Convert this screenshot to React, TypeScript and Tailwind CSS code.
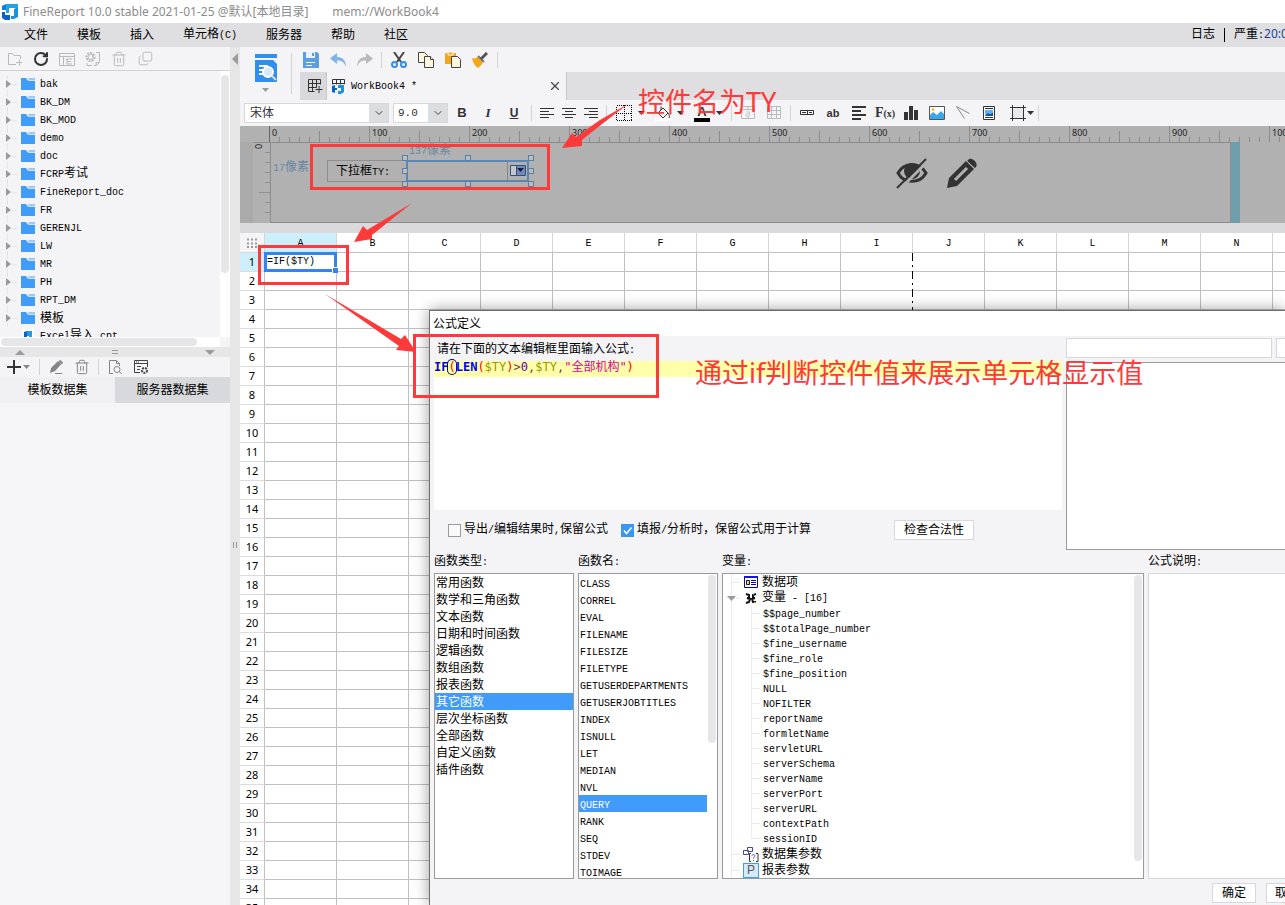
import type { ReactNode } from "react"
import { ChevronDown, RotateCw, Trash2, Copy, X } from "lucide-react"

const folders = [
  "bak", "BK_DM", "BK_MOD", "demo", "doc", "FCRP考试", "FineReport_doc",
  "FR", "GERENJL", "LW", "MR", "PH", "RPT_DM", "模板",
]

const menus = ["文件", "模板", "插入", "单元格(C)", "服务器", "帮助", "社区"]

const columns = ["A", "B", "C", "D", "E", "F", "G", "H", "I", "J", "K", "L", "M", "N", "O"]

const rows = Array.from({ length: 35 }, (_, i) => i + 1)

const categories = [
  "常用函数", "数学和三角函数", "文本函数", "日期和时间函数", "逻辑函数", "数组函数",
  "报表函数", "其它函数", "层次坐标函数", "全部函数", "自定义函数", "插件函数",
]

const functionNames = [
  "CLASS", "CORREL", "EVAL", "FILENAME", "FILESIZE", "FILETYPE", "GETUSERDEPARTMENTS",
  "GETUSERJOBTITLES", "INDEX", "ISNULL", "LET", "MEDIAN", "NVL", "QUERY", "RANK", "SEQ",
  "STDEV", "TOIMAGE",
]

const variables = [
  "$$page_number", "$$totalPage_number", "$fine_username", "$fine_role", "$fine_position",
  "NULL", "NOFILTER", "reportName", "formletName", "servletURL", "serverSchema",
  "serverName", "serverPort", "serverURL", "contextPath", "sessionID",
]

// Half-width runs are set smaller so that two of them fill one full-width cell
function T({ children }: { children: string }) {
  return (
    <>
      {children.split(/([\x20-\x7f]+)/).filter(Boolean).map((part, i) =>
        /^[\x20-\x7f]/.test(part) ? (
          <span key={i} className="font-['Liberation_Mono',monospace] text-[10px] whitespace-pre">{part}</span>
        ) : (
          <span key={i}>{part}</span>
        )
      )}
    </>
  )
}

function Icon({ children, size = 16 }: { children: ReactNode; size?: number }) {
  return (
    <svg width={size} height={size} viewBox="0 0 16 16" fill="none" stroke="currentColor" className="shrink-0">
      {children}
    </svg>
  )
}

function Tool({ label, children, className = "w-[26px]" }: { label: string; children: ReactNode; className?: string }) {
  return (
    <button type="button" aria-label={label} title={label} className={`flex h-5 shrink-0 items-center justify-center ${className}`}>
      {children}
    </button>
  )
}

function Sep({ className = "mx-[3px]" }: { className?: string }) {
  return <span className={`h-4 w-px shrink-0 bg-[#d3d3d6] ${className}`} />
}

function Caret() {
  return (
    <svg width="7" height="4" viewBox="0 0 7 4" className="shrink-0">
      <path d="M0 0h7L3.500 4z" fill="currentColor" />
    </svg>
  )
}

function FolderIcon() {
  return (
    <svg width="14" height="12" viewBox="0 0 14 12" className="shrink-0">
      <path d="M0 0h5l2 2h7v10H0z" fill="#409bf9" />
      <path d="M7 .5h7v1H8z" fill="#409bf9" />
      <path d="M5.500 1l2 1.500H14" stroke="#cfe6ff" fill="none" />
    </svg>
  )
}

function Logo() {
  return (
    <svg width="16" height="16" viewBox="0 0 16 16" className="shrink-0">
      <path d="M0 2l4-2v6H0z" fill="#0b7fd8" />
      <path d="M4 0h12v4l-2 2V4H7v5H4z" fill="#23a3e6" />
      <path d="M12 5l4-2v10l-4 2H9v-3h3z" fill="#1a93de" />
      <path d="M0 8h3v3h5v5H3l-3-2z" fill="#0a63c4" />
    </svg>
  )
}

function FileTree() {
  return (
    <div className="flex h-[276px] flex-col">
      <div className="flex min-h-0 flex-1">
        <ul className="min-w-0 flex-1 overflow-hidden pt-1">
          {folders.map((name) => (
            <li key={name} className="flex h-[18px] items-center">
              <svg width="21" height="18" viewBox="0 0 21 18" className="shrink-0">
                <path d="M6 5l5 4-5 4z" fill="#9b9b9b" />
                <path d="M12 9.500h5M7.500 0v4M7.500 14v4" stroke="#e6e6e8" />
              </svg>
              <FolderIcon />
              <span className="ml-[5px] whitespace-nowrap"><T>{name}</T></span>
            </li>
          ))}
          <li className="flex h-[18px] items-center pl-[22px]">
            <svg width="12" height="14" viewBox="0 0 12 14" className="shrink-0 bg-white">
              <path d="M2 3l3-1v10l-3-1z" fill="#0a64c8" />
              <path d="M5 2h5v9H7V7H5z" fill="#1f9de0" />
            </svg>
            <span className="ml-[6px] whitespace-nowrap"><T>Excel导入.cpt</T></span>
          </li>
        </ul>
        <div className="w-[10px] bg-white px-px pt-1">
          <div className="h-[198px] rounded bg-[#e6e6e8]" />
        </div>
      </div>
      <div className="flex h-[10px] bg-white">
        <div className="my-px ml-px w-[196px] rounded bg-[#e6e6e8]" />
        <div className="ml-auto w-[10px] bg-[#f4f4f7]" />
      </div>
    </div>
  )
}

function Sidebar() {
  return (
    <aside className="flex w-[230px] shrink-0 flex-col bg-[#f4f4f7]">
      <div className="flex h-6 items-center border-b border-[#d3d3d6] pl-[2px] text-[#b9b9bb]">
        <Tool label="新建文件夹">
          <Icon><path d="M9 13.500H1.500v-11h4l1.500 2h6.500V8M9 11.500h6M12.500 8.500v6" /></Icon>
        </Tool>
        <Tool label="刷新"><RotateCw size={16} strokeWidth={3} className="text-[#333]" /></Tool>
        <Tool label="重命名">
          <Icon><path d="M.5 2.500h15v12H.5zM.5 5.500h15M4.500 5.500v9M7 8h6M8 8v5M8 10.500h4M8 13h5" /></Icon>
        </Tool>
        <Tool label="设置">
          <Icon>
            <circle cx="5.500" cy="6" r="4" strokeWidth="2" strokeDasharray="2 1" />
            <circle cx="5.500" cy="6" r="2.500" />
            <path d="M11 1.500h3.500v9M9 14.500h2M2 12v2.500h5M11 14.500v-3h3.500z" />
          </Icon>
        </Tool>
        <Tool label="删除"><Trash2 size={16} strokeWidth={1.500} /></Tool>
        <Tool label="复制"><Copy size={15} strokeWidth={1.500} className="-scale-y-100" /></Tool>
      </div>
      <FileTree />
      <div className="flex h-[10px] items-center justify-between bg-[#e6e6e6] px-[15px] text-[#9b9b9b]">
        <svg width="10" height="5" viewBox="0 0 10 5"><path d="M0 5l5-5 5 5z" fill="currentColor" /></svg>
        <svg width="6" height="4" viewBox="0 0 6 4"><path d="M0 .5h6M0 3.500h6" stroke="currentColor" /></svg>
        <svg width="10" height="5" viewBox="0 0 10 5"><path d="M0 0l5 5 5-5z" fill="currentColor" /></svg>
      </div>
      <div className="flex h-5 items-center text-[#858585]">
        <Tool label="添加数据集" className="w-9 gap-[2px]">
          <svg width="14" height="14" viewBox="0 0 14 14"><path d="M0 7h14M7 0v14" stroke="#333" strokeWidth="2" /></svg>
          <Caret />
        </Tool>
        <Sep />
        <Tool label="编辑">
          <Icon>
            <path d="M3 9l7-7 3.500 3L7 12l-5 2z" fill="currentColor" stroke="none" />
            <path d="M11.500 1.500l3 3" strokeWidth="2" />
            <path d="M7 14.500h7" />
          </Icon>
        </Tool>
        <Tool label="删除"><Trash2 size={16} strokeWidth={1.500} /></Tool>
        <Sep />
        <Tool label="预览">
          <Icon><path d="M6 14.500H2.500v-13h7l3 3V7M9.500 1.500v3h3" /><circle cx="10" cy="10.500" r="3" /><path d="M12 12.500l3 2.500" /></Icon>
        </Tool>
        <Tool label="连接配置">
          <Icon><g stroke="#444"><path d="M7 13.500H1.500v-12h13V8M1.500 4.500h13M3 3h1M5 3h1M4 7.500h4M4 10.500h3" /><circle cx="11.500" cy="11.500" r="2.500" strokeWidth="2" strokeDasharray="2 1" /></g></Icon>
        </Tool>
      </div>
      <div className="grid h-[26px] grid-cols-2">
        <button type="button" className="bg-[#f0f0f3]">模板数据集</button>
        <button type="button" className="bg-[#d8d9dd]">服务器数据集</button>
      </div>
      <div className="flex-1 bg-[#f5f5f7]" />
    </aside>
  )
}

function QuickBar() {
  return (
    <div className="flex h-[25px] items-center">
      <div className="flex gap-[11px] pl-[3px]">
        <Tool label="保存" className="w-4">
          <Icon><path d="M0 0h14l2 2v14H0z" fill="#5d9ee0" stroke="none" /><path d="M3 0h9v6H3z" fill="#eaf3fc" stroke="none" /><path d="M9 1h2v3H9z" fill="#5d9ee0" stroke="none" /><path d="M3 10.500h9M3 13.500h6" stroke="#fff" /></Icon>
        </Tool>
        <Tool label="撤销" className="w-4">
          <Icon><path d="M7 1L0 6.500 7 12V8.500c4 0 7 1 9 6.500 0-6-3-10-9-10z" fill="#7db3ee" stroke="none" /></Icon>
        </Tool>
        <Tool label="重做" className="w-4">
          <Icon><path d="M9 1l7 5.500L9 12V8.500c-4 0-7 1-9 6.500 0-6 3-10 9-10z" fill="#b7b9bb" stroke="none" /></Icon>
        </Tool>
      </div>
      <Sep className="mr-[9px] ml-2" />
      <div className="flex gap-[11px]">
        <Tool label="剪切" className="w-4">
          <Icon><path d="M3 0l7 10M13 0L6 10" stroke="#444" strokeWidth="2" /><g stroke="#2f8ef0" strokeWidth="2"><circle cx="3.500" cy="12.500" r="2.500" /><circle cx="12.500" cy="12.500" r="2.500" /></g></Icon>
        </Tool>
        <Tool label="复制" className="w-4">
          <Icon><g fill="#fff6df" stroke="#444"><path d="M.5.500h6l3 3v7h-9z" /><path d="M6.500 4.500h6l3 3v8h-9z" /><path d="M12.500 4.500v3h3" /></g></Icon>
        </Tool>
        <Tool label="粘贴" className="w-4">
          <Icon><path d="M0 1h11v11H0z" fill="#f2a51d" stroke="none" /><path d="M3 0h5v3H3z" fill="#f2a51d" stroke="#fff" /><path d="M6.500 4.500h6l3 3v8h-9z" fill="#fff6df" stroke="#444" /></Icon>
        </Tool>
        <Tool label="格式刷" className="w-4">
          <Icon><path d="M0 6c2 1 4 0 6-1l5 5c-1 2-2 4-5 6-3-2-5-5-6-10z" fill="#f5a716" stroke="none" /><path d="M6 4l6 6" stroke="#777" strokeWidth="2" /><path d="M9 7l6-6" stroke="#555" strokeWidth="3" /></Icon>
        </Tool>
      </div>
      <Sep className="ml-[9px]" />
    </div>
  )
}

function GridGlyph() {
  return <path d="M1.500 1.500h12v5M1.500 1.500v12h6M1.500 5.500h12M1.500 9.500h8M5.500 1.500v12M9.500 1.500v8" stroke="#333" />
}

function TabStrip() {
  return (
    <div className="flex h-7 bg-[#dfdfe2]">
      <button type="button" aria-label="新建工作簿" className="flex w-[27px] items-center justify-center border-r border-[#c6c6ca] bg-[#d9d9dd] pl-1">
        <Icon><GridGlyph /><path d="M12 8v7M8.500 11.500h7" stroke="#333" /></Icon>
      </button>
      <div className="flex w-[240px] items-center border-r border-[#c6c6ca] bg-[#f4f4f7] pl-1">
        <Icon><GridGlyph /><path d="M0 6.500h14V16H0z" fill="#f4f4f7" stroke="none" /><path d="M1 8l3-1v3h2v2H4v3l-3-1z" fill="#0a63c4" stroke="none" /><path d="M7 7h6v7l-3 2H7v-3h3v-3H7z" fill="#1a93de" stroke="none" /></Icon>
        <span className="ml-1"><T>WorkBook4 *</T></span>
        <button type="button" aria-label="关闭" className="ml-auto mr-1"><X size={14} className="text-[#444]" /></button>
      </div>
    </div>
  )
}

function Dropdown({ label, value, wide }: { label: string; value: string; wide?: boolean }) {
  return (
    <label className={`relative flex h-5 shrink-0 border border-[#d8d8dc] bg-white ${wide ? "w-[145px]" : "mr-px ml-1 w-[55px]"}`}>
      <select aria-label={label} className={`w-full appearance-none bg-transparent outline-none ${wide ? "pl-[5px]" : "pl-1 font-['Liberation_Mono',monospace] text-[11px]"}`}>
        <option>{value}</option>
      </select>
      <span className="pointer-events-none absolute inset-y-0 right-0 flex w-[19px] items-center justify-center bg-[#dcdde1]">
        <ChevronDown size={12} className="text-[#444]" />
      </span>
    </label>
  )
}

function FormatBar() {
  return (
    <div className="flex h-[26px] items-center pl-1 text-[#333]">
      <Dropdown label="字体" value="宋体" wide />
      <Dropdown label="字号" value="9.0" />
      <Tool label="加粗"><b className="font-['Liberation_Sans',sans-serif] text-[13px]">B</b></Tool>
      <Tool label="斜体"><b className="font-['Liberation_Serif',serif] text-[13px] italic">I</b></Tool>
      <Tool label="下划线"><b className="font-['Liberation_Sans',sans-serif] text-[12px] underline">U</b></Tool>
      <Sep className="mx-1" />
      <Tool label="左对齐" className="w-[22px]"><Icon><path d="M1 3.500h14M1 6.500h9M1 9.500h14M1 12.500h9" /></Icon></Tool>
      <Tool label="居中" className="w-[22px]"><Icon><path d="M1 3.500h14M4 6.500h8M1 9.500h14M4 12.500h8" /></Icon></Tool>
      <Tool label="右对齐" className="w-[22px]"><Icon><path d="M1 3.500h14M6 6.500h9M1 9.500h14M6 12.500h9" /></Icon></Tool>
      <Sep className="mx-1" />
      <Tool label="边框" className="w-[39px] gap-[6px]">
        <Icon><path d="M.5.500h15v15H.5zM8.500 0v16M0 8.500h16" stroke="#000" strokeDasharray="1 1" shapeRendering="crispEdges" /></Icon>
        <Caret />
      </Tool>
      <Tool label="填充色" className="w-[39px] gap-[6px]">
        <Icon><path d="M3 8l5-5 5 5-5 5zM6 5V1.500M13 8c1 2 2 3 1 5" /><path d="M0 13h16v3H0z" fill="#fff" stroke="none" /></Icon>
        <Caret />
      </Tool>
      <Tool label="字体色" className="w-[39px] gap-[6px]">
        <span className="w-4 border-b-4 border-black text-center font-['Liberation_Sans',sans-serif] text-[13px] leading-[13px] font-bold">A</span>
        <Caret />
      </Tool>
      <Sep />
      <Tool label="合并单元格"><Icon><path d="M1.500 1.500h13v12h-13zM1.500 4.500h13M8 1.500v3M8 11v2.500" stroke="#bbb" /><path d="M6 7h3.500v4H6V9h3" stroke="#ccc" /></Icon></Tool>
      <Tool label="取消合并"><Icon><path d="M1.500 1.500h13v12h-13zM1.500 5.500h13M1.500 9.500h13M5.500 1.500v12M10.500 1.500v12" stroke="#bbb" /></Icon></Tool>
      <Sep />
      <Tool label="单元格元素"><Icon><path d="M1.500 5.500h13v4h-13zM8.500 5.500v4M3 7.500h4M10 7.500h3" /></Icon></Tool>
      <Tool label="文本"><b className="font-['Liberation_Sans',sans-serif] text-[11px]">ab</b></Tool>
      <Tool label="富文本"><Icon><path d="M1 2h14M1 6h9M1 10h14M1 14h9" strokeWidth="2" /></Icon></Tool>
      <Tool label="公式"><span className="font-['Liberation_Serif',serif] text-[14px] font-bold">F<span className="text-[10px]">(x)</span></span></Tool>
      <Tool label="图表"><Icon><path d="M1 7h4v8H1zM6 1h4v14H6zM11 5h4v10h-4z" fill="currentColor" stroke="none" /></Icon></Tool>
      <Tool label="图片"><Icon><path d="M.5 1.500h15v13H.5z" fill="#fff" stroke="#555" /><path d="M1 14V10l3-3 4 3 4-4 3 3v5z" fill="#39a7ec" stroke="none" /><circle cx="4" cy="4.500" r="1.500" fill="#fbc02d" stroke="none" /></Icon></Tool>
      <Tool label="斜线"><Icon><path d="M1.500 1.500l8 12M1.500 1.500l13 7" stroke="#888" /></Icon></Tool>
      <Tool label="子报表"><Icon><path d="M2.500 1.500h11v13h-11z" fill="#fff" /><path d="M4 3.500h8M4 12.500h8" /><path d="M4 5h8v6H4z" fill="#5fb0f5" stroke="none" /><path d="M4 11l3-3 2 1.500 3-2V11z" fill="#1c4f8f" stroke="none" /></Icon></Tool>
      <Tool label="悬浮元素" className="ml-[7px] w-[26px] gap-px">
        <Icon><path d="M2.500 2.500h11v11h-11z" fill="#e8e8ea" /><path d="M2.500 0v16M13.500 0v16M0 2.500h16M0 13.500h16" /></Icon>
        <Caret />
      </Tool>
      <Sep />
    </div>
  )
}

function Ruler() {
  return (
    <div className="h-4 overflow-hidden bg-[#b1b1b1]">
      <svg width="1400" height="17" viewBox="0 0 1400 17" shapeRendering="crispEdges">
        {Array.from({ length: 120 }, (_, i) => (
          <path key={i} d={`M${29.5 + i * 10} ${i % 10 === 0 ? 0 : i % 5 === 0 ? 5 : 11}V17`} stroke={i === 0 ? "#666" : "#8c8c8c"} />
        ))}
        {Array.from({ length: 12 }, (_, i) => (
          <text key={i} x={32 + i * 100} y="10" fontSize="9" fontFamily="'Noto Sans', sans-serif" fill="#222">{i * 100}</text>
        ))}
      </svg>
    </div>
  )
}

const handles = [
  "left-[131px] top-3", "left-[194px] top-3", "left-[257px] top-3",
  "left-[131px] top-[25px]", "left-[257px] top-[25px]",
  "left-[131px] top-[38px]", "left-[194px] top-[38px]", "left-[257px] top-[38px]",
]

function ParamPane() {
  return (
    <div className="flex h-[81px] bg-[#b1b1b1]">
      <div className="w-[13px] bg-[#aaaaaa]" />
      <svg width="17" height="81" viewBox="0 0 17 81" className="shrink-0" shapeRendering="crispEdges">
        <path d="M0 .5h17M12 10.500h5M12 20.500h5M12 30.500h5M12 40.500h5M6 50.500h11M12 60.500h5M12 70.500h5" stroke="#909090" />
        <text transform="translate(9 7) rotate(-90)" fontSize="9" fontFamily="'Noto Sans', sans-serif" fill="#222">0</text>
      </svg>
      {/* Design canvas */}
      <div className="relative w-[961px] shrink-0 overflow-hidden border border-[#8c8c8c]">
        <span className="absolute top-4 left-[2px] leading-4 text-[#6a87a3]"><T>17像素</T></span>
        <span className="absolute -top-px left-[138px] leading-4 text-[#6a87a3]"><T>137像素</T></span>
        <label htmlFor="combo-ty" className="absolute top-[17px] left-14 h-[22px] w-[80px] border border-[#8f8f8f] pl-2 leading-5">
          <T>下拉框TY:</T>
        </label>
        <input id="combo-ty" className="absolute top-[17px] left-[135px] h-[22px] w-[123px] border-2 border-[#5b87b8] bg-transparent outline-none" />
        <svg width="22" height="18" viewBox="0 0 22 18" className="absolute top-[19px] left-[235px]">
          <path d="M1.500 0v18" stroke="#888" />
          <path d="M4.500 3.500h15v10h-15z" fill="#c4c8d0" stroke="#34507c" />
          <path d="M10 4h9v9h-9z" fill="#7389b3" />
          <path d="M10.500 3v10" stroke="#34507c" />
          <path d="M11 6h7l-3.500 4z" fill="#0c1f4e" />
        </svg>
        {handles.map((place) => (
          <span key={place} className={`absolute size-[6px] border border-[#5f7f9f] bg-[#b9bcc0] ${place}`} />
        ))}
        <svg width="32" height="32" viewBox="0 0 32 32" className="absolute top-[14px] left-[625px]">
          <path d="M2 16c6-11 22-11 28 0-6 11-22 11-28 0z" fill="none" stroke="#333" strokeWidth="3" />
          <circle cx="16" cy="14" r="8" fill="#333" />
          <path d="M3 33L33 3" stroke="#b1b1b1" strokeWidth="3" />
          <path d="M1 31L30 2" stroke="#333" strokeWidth="2" />
        </svg>
        <svg width="32" height="32" viewBox="0 0 32 32" className="absolute top-[14px] left-[675px]">
          <path d="M1 31l2-10L20 4l8 8-17 17z" fill="#333" />
          <path d="M9 23L21 11" stroke="#b1b1b1" strokeWidth="3" />
          <path d="M22 3c3-4 11 3 8 7l-1 1-8-7z" fill="#333" />
          <path d="M20 3l9 9" stroke="#b1b1b1" />
        </svg>
      </div>
      <div className="w-[9px] shrink-0 bg-[#6e9dac]" />
    </div>
  )
}

function Sheet() {
  return (
    <div className="relative min-h-0 flex-1 overflow-hidden bg-white">
      <table className="w-[1105px] table-fixed border-separate border-spacing-0 text-center">
        <thead>
          <tr className="h-5">
            <th className="w-[25px] border-r border-b border-[#d6d6da] bg-[#f4f4f7]">
              <svg width="12" height="10" viewBox="0 0 12 10" className="mx-auto">
                <path d="M1 1.500h11M1 5.500h11M1 9h11" stroke="#999" strokeWidth="2" strokeDasharray="2 2" />
              </svg>
            </th>
            {columns.map((c) => (
              <th key={c} className={`h-5 w-[72px] border-r border-r-[#d6d6da] border-b border-b-[#c0c0c0] p-0 pt-[3px] font-['Liberation_Mono',monospace] text-[10px] leading-4 font-normal ${c === "A" ? "bg-[#cdeefb]" : ""}`}>
                {c}
              </th>
            ))}
          </tr>
        </thead>
        <tbody>
          {rows.map((r) => (
            <tr key={r}>
              <th className={`h-[19px] border-r border-b border-r-[#c0c0c0] border-b-[#dcdce0] p-0 font-['Noto_Sans',sans-serif] text-[11px] leading-4 font-normal ${r === 1 ? "bg-[#cdeefb]" : ""}`}>
                {r}
              </th>
              {columns.map((c) => (
                <td key={c} className="relative border-r border-b border-[#c0c0c0] p-0 leading-4">
                  {r === 1 && c === "A" && (
                    <div className="absolute -inset-px z-10 flex items-center border-[3px] border-[#3384ee]">
                      <T>=IF($TY)</T>
                      <span className="absolute -right-1 -bottom-1 size-[6px] border-t border-l border-white bg-[#3384ee]" />
                    </div>
                  )}
                </td>
              ))}
            </tr>
          ))}
        </tbody>
      </table>
      {/* Page break */}
      <svg width="1" height="100%" className="absolute top-5 left-[672px]">
        <path d="M.5 0V700" stroke="#fff" />
        <path d="M.5 0V700" stroke="#000" strokeDasharray="8 4 2 4" />
      </svg>
    </div>
  )
}

function ListBox({ items, selected, scroll }: { items: string[]; selected: string; scroll?: boolean }) {
  return (
    <div className="flex w-[140px] shrink-0 overflow-hidden border border-[#9a9a9a] bg-white">
      <ul role="listbox" className="flex-1">
        {items.map((item) => (
          <li
            key={item}
            role="option"
            aria-selected={item === selected}
            className={`h-[17px] pl-px leading-[17px] whitespace-nowrap ${item === selected ? "bg-[#409bf9] text-white" : ""}`}
          >
            <T>{item}</T>
          </li>
        ))}
      </ul>
      {scroll && <div className="mx-px mt-px h-[168px] w-2 rounded bg-[#e6e6e8]" />}
    </div>
  )
}

function TreeHead({ icon, label, caret }: { icon: ReactNode; label: string; caret?: boolean }) {
  return (
    <li className="flex h-4 items-center">
      <svg width="20" height="16" viewBox="0 0 20 16" className="shrink-0">
        <path d="M8.500 0v16M9 8.500h8" stroke="#ececee" />
        {caret && <path d="M4 6h9l-4.500 5z" fill="#9b9b9b" />}
      </svg>
      {icon}
      <span className="ml-[3px] leading-4"><T>{label}</T></span>
    </li>
  )
}

function VariableTree() {
  return (
    <div className="flex w-[422px] shrink-0 overflow-hidden border border-[#9a9a9a] bg-white">
      <ul className="flex-1">
        <TreeHead
          label="数据项"
          icon={
            <Icon>
              <path d="M1.500 2.500h13v11h-13z" fill="#fff" stroke="#0a0a90" />
              <path d="M1 2h14v2H1z" fill="#1414f0" stroke="none" />
              <path d="M3.500 6.500h3v4h-3z" fill="#ffe600" stroke="#0a0a80" />
              <path d="M8 6.500h5M8 8.500h5M8 10.500h5" stroke="#0a0a80" />
            </Icon>
          }
        />
        <TreeHead
          caret
          label="变量 - [16]"
          icon={
            <Icon>
              <path d="M3 4l3 1v3H4M13 4l-3 1v3h2M4 8l3 1-1 3-3 1M12 8l-3 1 1 3h3" stroke="#111" strokeWidth="2" />
              <path d="M10 5l2-2" stroke="#38b0a0" />
              <path d="M11 12l2 1" stroke="#d6c84a" />
            </Icon>
          }
        />
        {variables.map((name, i) => (
          <li key={name} className="flex h-[15px] items-center">
            <svg width="38" height="15" viewBox="0 0 38 15" className="shrink-0">
              <path d={`M8.500 0v15M28.500 0V${i === variables.length - 1 ? 8 : 15}M29 7.500h8`} stroke="#ececee" fill="none" />
            </svg>
            <span className="ml-[2px] leading-[15px]"><T>{name}</T></span>
          </li>
        ))}
        <TreeHead
          label="数据集参数"
          icon={<Icon><path d="M4.500 1.500h5v4h-5zM.5 4.500h5v4h-5z" fill="#fff" stroke="#4646a0" /><path d="M8 7.500H6.500v8H8M13 7.500h2v8h-2" stroke="#333" /><path d="M9 10c0-2 3-2 3 0 0 1-1.500 1-1.500 2.500M10.500 14v1" stroke="#5c5cc0" /></Icon>}
        />
        <TreeHead
          label="报表参数"
          icon={<span className="flex h-[15px] w-4 items-center justify-center border border-[#409bf9] bg-[#d5ebfc] font-['Liberation_Sans',sans-serif] text-[12px] text-[#555]">P</span>}
        />
      </ul>
      <div className="mx-px mt-px h-[286px] w-2 rounded bg-[#e6e6e8]" />
    </div>
  )
}

function Check({ id, label, checked }: { id: string; label: string; checked?: boolean }) {
  return (
    <div className="flex items-center gap-[3px]">
      <span className="relative flex">
        <input id={id} type="checkbox" defaultChecked={checked} className="peer size-[13px] appearance-none border border-[#9a9a9a] bg-[#fafafa] checked:border-[#3a97f0] checked:bg-[#3a97f0]" />
        <svg width="13" height="13" viewBox="0 0 13 13" className="pointer-events-none absolute inset-0 hidden peer-checked:block">
          <path d="M3 6.500L5.500 9.500 10.500 3.500" stroke="#fff" strokeWidth="1.500" fill="none" />
        </svg>
      </span>
      <label htmlFor={id}><T>{label}</T></label>
    </div>
  )
}

function FormulaDialog() {
  return (
    <section role="dialog" aria-label="公式定义" className="absolute top-[310px] right-0 bottom-0 left-[429px] z-20 flex flex-col overflow-hidden border-t border-l border-[#6f6f6f] bg-[#f4f4f7] shadow-[0_0_14px_rgba(0,0,0,0.4)]">
      <h2 className="h-[25px] bg-white pl-[3px] leading-[25px]">公式定义</h2>
      <div className="flex h-[214px] pl-1">
        <div className="flex w-[628px] shrink-0 flex-col">
          <p className="h-[25px] pl-[3px] leading-[26px]"><T>请在下面的文本编辑框里面输入公式:</T></p>
          <div role="textbox" aria-label="公式" contentEditable suppressContentEditableWarning className="h-[149px] bg-white font-['DejaVu_Sans_Mono','Noto_Sans_CJK_SC',monospace] text-[12px] outline-none">
            <div className="h-4 bg-[#ffffaa] leading-3 whitespace-pre">
              <b className="text-[#0000ff]">IF</b>
              <span className="rounded-full text-[#ff0000] ring-1 ring-[#000080]">(</span>
              <b className="text-[#0000ff]">LEN</b>
              <span className="text-[#ff0000]">(</span>
              <span className="text-[#999900]">$TY</span>
              <span className="text-[#ff0000]">)</span>
              <span className="text-[#804040]">&gt;</span>
              <span className="text-[#6600aa]">0</span>
              <span className="text-[#804040]">,</span>
              <span className="text-[#999900]">$TY</span>
              <span className="text-[#804040]">,</span>
              <span className="text-[#dc009c]">"全部机构"</span>
              <span className="text-[#ff0000]">)</span>
            </div>
          </div>
          <div className="flex flex-1 items-center gap-[13px] pl-[14px]">
            <Check id="keep-on-export" label="导出/编辑结果时,保留公式" />
            <Check id="keep-on-submit" label="填报/分析时，保留公式用于计算" checked />
            <button type="button" className="mr-[88px] ml-auto h-5 w-20 border border-[#d8d8dc] bg-white">检查合法性</button>
          </div>
        </div>
        <div className="ml-1 flex min-w-0 flex-1 flex-col gap-1 overflow-hidden pt-[2px]">
          <div className="flex gap-1">
            <input aria-label="搜索" className="h-5 w-[206px] shrink-0 border border-[#d8d8dc] bg-white outline-none" />
            <button type="button" aria-label="搜索" className="h-5 w-[60px] shrink-0 border border-[#d8d8dc] bg-white" />
          </div>
          <div className="flex-1 border border-r-0 border-[#9a9a9a] bg-white" />
        </div>
      </div>
      <div className="flex h-[23px] items-center gap-1 pl-1">
        <span className="w-[140px]"><T>函数类型:</T></span>
        <span className="w-[140px]"><T>函数名:</T></span>
        <span className="w-[422px] shrink-0"><T>变量:</T></span>
        <span className="whitespace-nowrap"><T>公式说明:</T></span>
      </div>
      <div className="flex h-[306px] gap-1 pl-1">
        <ListBox items={categories} selected="其它函数" />
        <ListBox items={functionNames} selected="QUERY" scroll />
        <VariableTree />
        <div className="flex-1 border border-r-0 border-[#d8d8dc] bg-white" />
      </div>
      <div className="flex justify-end gap-[10px] pt-1">
        <button type="button" className="h-5 w-11 border border-[#d8d8dc] bg-white">确定</button>
        <button type="button" className="h-5 w-[19px] overflow-hidden border border-r-0 border-[#d8d8dc] bg-white pl-2 text-left whitespace-nowrap">取消</button>
      </div>
    </section>
  )
}

function Annotations() {
  return (
    <div className="pointer-events-none absolute inset-0 z-30 overflow-hidden font-['Noto_Sans','Noto_Sans_CJK_SC',sans-serif] text-[27px] leading-8 whitespace-nowrap text-[#fc3a39]">
      <div className="absolute top-36 left-[310px] h-[46px] w-60 border-[3px] border-[#fc3a39]" />
      <div className="absolute top-[245px] left-[258px] h-10 w-[91px] border-[3px] border-[#fc3a39]" />
      <div className="absolute top-[334px] left-[413px] h-16 w-[246px] border-[3px] border-[#fc3a39]" />
      <svg width="640" height="360" viewBox="0 0 640 360" fill="#fc3a39" className="absolute top-0 left-0">
        <path d="M562 148l10-15 4 4 24-17 28-16-26 20-20 16 0 6z" />
        <path d="M354 242l9-16 4 4 45-27-40 32 0 4z" />
        <path d="M325 294l76 45 4-4 11 17-20-2 3-4z" />
      </svg>
      <span className="absolute top-[86px] left-[638px]">控件名为TY</span>
      <span className="absolute top-[357px] left-[695px]">通过if判断控件值来展示单元格显示值</span>
    </div>
  )
}

export default function App() {
  return (
    <div className="relative flex h-screen flex-col overflow-hidden bg-[#f4f4f7] font-['Noto_Sans','Noto_Sans_CJK_SC',sans-serif] text-[12px] leading-4 text-black">
      <header className="flex h-[23px] shrink-0 items-center bg-white pl-[2px] text-[#8c8c8c]">
        <Logo />
        <span className="ml-[5px]">FineReport 10.0 stable 2021-01-25 @默认[本地目录]</span>
        <span className="ml-6">mem://WorkBook4</span>
      </header>
      <nav className="flex h-6 shrink-0 items-center gap-[29px] overflow-hidden bg-[#dfdfe2] pl-6">
        {menus.map((m) => (
          <button key={m} type="button" className="shrink-0"><T>{m}</T></button>
        ))}
        <span className="ml-auto flex w-[94px] shrink-0 gap-[9px] overflow-hidden whitespace-nowrap">
          <span>日志</span>
          <span className="my-[2px] w-px shrink-0 bg-black" />
          <span><T>严重:</T><span className="text-[#1c3f94]">20:05</span></span>
        </span>
      </nav>
      <div className="flex min-h-0 flex-1">
        <Sidebar />
        <div className="flex w-[10px] shrink-0 flex-col items-center bg-[#e6e6e6] pt-[6px] text-[#9b9b9b]">
          <svg width="6" height="12" viewBox="0 0 6 12"><path d="M6 0v12L0 6z" fill="currentColor" /></svg>
          <span className="flex-4" />
          <svg width="4" height="6" viewBox="0 0 4 6"><path d="M.5 0v6M3.500 0v6" stroke="currentColor" /></svg>
          <span className="flex-3" />
        </div>
        <main className="flex min-w-0 flex-1 flex-col overflow-hidden">
          <div className="flex">
            <div className="flex w-[60px] shrink-0 py-[6px]">
              <button type="button" aria-label="预览" className="flex w-[52px] flex-col items-center gap-[6px] border-r border-[#d3d3d6] text-[#9b9b9b]">
                <svg width="22" height="29" viewBox="0 0 22 29">
                  <path d="M0 1h22v4H0zM0 7h18l4 4v18H0z" fill="#2f8ef0" />
                  <path d="M4 13h9M4 17h5M4 21h5" stroke="#fff" strokeWidth="2" />
                  <circle cx="13" cy="19" r="5" fill="#d7e9fb" stroke="#fff" strokeWidth="2" />
                  <path d="M17 23l4 4" stroke="#ddd" strokeWidth="2" />
                </svg>
                <Caret />
              </button>
            </div>
            <div className="min-w-0 flex-1">
              <QuickBar />
              <TabStrip />
            </div>
          </div>
          <FormatBar />
          <Ruler />
          <ParamPane />
          <div className="h-[10px] shrink-0 bg-[#dadadd]" />
          <Sheet />
        </main>
      </div>
      <FormulaDialog />
      <Annotations />
    </div>
  )
}
